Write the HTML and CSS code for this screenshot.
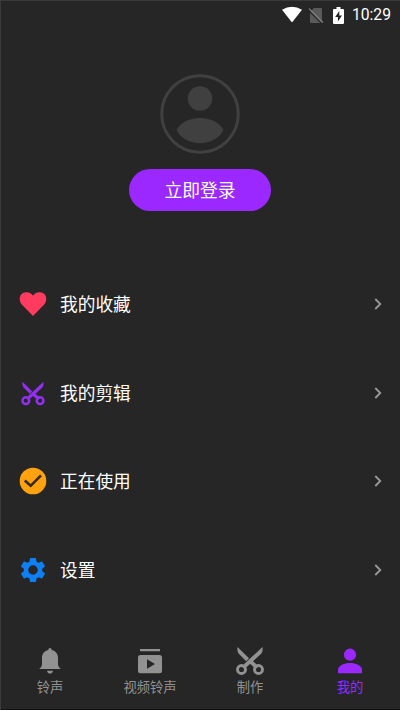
FILE: index.html
```html
<!DOCTYPE html>
<html lang="zh-CN">
<head>
<meta charset="utf-8">
<title>我的</title>
<link rel="stylesheet" href="styles.css">
</head>
<body>
<div class="screen">
  <header class="status">
    <svg class="wifi" width="20" height="16" viewBox="0 0 20 16"><path d="M0 3.2Q10-2.8 20 3.2L10 16Z"/></svg>
    <svg class="sim" width="16" height="17" viewBox="0 0 16 17"><path fill="#5a5a5a" d="M6 1h7q1 0 1 1v13q0 1-1 1H3q-1 0-1-1V5Z"/><path d="M.2 3 14 16.800" stroke="#262626" stroke-width="1.2"/><path d="M1 1.6 15 15.6" stroke="#858585" stroke-width="1.3"/></svg>
    <svg class="battery" width="11" height="17" viewBox="0 0 11 17"><path d="M3.5 0h4v2H10q1 0 1 1v13q0 1-1 1H1q-1 0-1-1V3q0-1 1-1h2.500Z"/><path fill="#222" d="M6.300 4 2.200 10h2.700v4.500L9 8.500H6.300Z"/></svg>
    <span class="clock">10:29</span>
  </header>

  <section class="profile">
    <svg width="80" height="80" viewBox="0 0 80 80"><circle cx="40" cy="40" r="38.300" fill="none" stroke="#404040" stroke-width="3"/><g fill="#404040"><circle cx="40" cy="24.500" r="12.200"/><path d="M16.500 56C21 48 30 44 40 44S59 48 63.500 56C59 64.500 50 69.200 40 69.200S21 64.500 16.500 56Z"/></g></svg>
    <button class="login">立即登录</button>
  </section>

  <nav class="menu">
    <a class="row"><svg class="icon" width="28" height="28" viewBox="0 0 28 28"><path fill="#ff3b5f" d="M14 26 3 14.800C-1 10.500.300 2.200 7.300 2.200Q11.700 2.200 14 5.600 16.300 2.200 20.700 2.200C27.700 2.200 29 10.500 25 14.800Z"/></svg><span>我的收藏</span><svg class="chevron" width="8" height="12" viewBox="0 0 8 12"><path d="m1.300 1 5 5-5 5"/></svg></a>
    <a class="row"><svg class="icon" width="28" height="28" viewBox="0 0 28 28"><use href="#scissors" color="#932ff0" transform="translate(2.200 2.800) scale(.84)"/></svg><span>我的剪辑</span><svg class="chevron" width="8" height="12" viewBox="0 0 8 12"><path d="m1.300 1 5 5-5 5"/></svg></a>
    <a class="row"><svg class="icon" width="28" height="28" viewBox="0 0 28 28"><circle cx="14" cy="14" r="13.300" fill="#ffa20d"/><path d="m5.800 13.500 5.900 5.300L22 8.300" fill="none" stroke="#332819" stroke-width="2.600"/></svg><span>正在使用</span><svg class="chevron" width="8" height="12" viewBox="0 0 8 12"><path d="m1.300 1 5 5-5 5"/></svg></a>
    <a class="row"><svg class="icon" width="28" height="28" viewBox="-1 -1 26 26"><path fill="#0d80f5" d="M19.430 12.980c.040-.320.070-.640.070-.980s-.030-.660-.070-.980l2.110-1.650c.190-.150.240-.420.120-.640l-2-3.460c-.120-.220-.390-.300-.610-.220l-2.490 1c-.520-.400-1.080-.730-1.690-.980l-.380-2.650C14.460 2.180 14.250 2 14 2h-4c-.250 0-.460.180-.490.420l-.380 2.650c-.610.250-1.170.590-1.690.980l-2.490-1c-.230-.090-.490 0-.610.220l-2 3.460c-.130.220-.070.490.120.640l2.110 1.650c-.040.320-.070.650-.070.980s.030.660.070.980l-2.110 1.650c-.190.150-.240.420-.120.640l2 3.460c.120.220.390.300.610.220l2.490-1c.520.400 1.080.730 1.690.980l.380 2.650c.030.240.240.420.490.420h4c.250 0 .460-.180.490-.420l.380-2.650c.610-.250 1.170-.590 1.690-.980l2.490 1c.230.090.490 0 .610-.220l2-3.460c.120-.220.070-.490-.120-.640ZM12 15.900a3.900 3.900 0 1 1 0-7.800 3.900 3.900 0 0 1 0 7.800Z" transform="translate(-1.680 -1.440) scale(1.140 1.120)"/></svg><span>设置</span><svg class="chevron" width="8" height="12" viewBox="0 0 8 12"><path d="m1.300 1 5 5-5 5"/></svg></a>
  </nav>

  <footer class="tabs">
    <a class="tab"><svg width="28" height="28" viewBox="0 0 28 28" fill="currentColor"><path d="M14 1q1.700 0 1.700 2C20 4 22 7 22 11v6.500q0 2 2.800 4.500H3.200Q6 19.500 6 17.500V11c0-4 2-7 6.300-8Q12.300 1 14 1ZM11 23.700h6q-.5 2.800-3 2.800t-3-2.800Z"/></svg><span>铃声</span></a>
    <a class="tab"><svg width="28" height="28" viewBox="0 0 28 28" fill="currentColor"><path fill-rule="evenodd" d="M4 2h20v2.200H4ZM4.500 8h19q2.500 0 2.500 2.500v13.300q0 2.500-2.500 2.500h-19q-2.500 0-2.500-2.500V10.500q0-2.500 2.500-2.500ZM11 12.300v9.500l8-4.800Z"/></svg><span>视频铃声</span></a>
    <a class="tab"><svg width="28" height="28" viewBox="0 0 28 28"><g id="scissors"><path fill="currentColor" d="M1.500 0 13 11.300 10.200 14.200 2.800 6.800Q.800 4 1.500 0ZM26.500 0Q27.200 4 25.200 6.800L8.500 22 5.800 19.200ZM13.200 16 16 13.200 22.500 19.300 19.800 22Z"/><g fill="none" stroke="currentColor" stroke-width="2.900"><circle cx="5.500" cy="22.500" r="4"/><circle cx="22.500" cy="22.500" r="4"/></g></g></svg><span>制作</span></a>
    <a class="tab active"><svg width="28" height="28" viewBox="0 0 28 28" fill="currentColor"><circle cx="14" cy="7.700" r="6.100"/><path d="M2 26.300v-3.600C2 18.500 8.500 16 14 16s12 2.500 12 6.700v3.600Z"/></svg><span>我的</span></a>
  </footer>
</div>
</body>
</html>
```

FILE: styles.css
```css
* { box-sizing: border-box; }

body {
  margin: 0;
  background: #262626;
  color: #fff;
  font-family: Roboto, "Noto Sans CJK SC", sans-serif;
}

svg { display: block; flex: none; }

.screen {
  width: 400px;
  height: 710px;
  display: flex;
  flex-direction: column;
  box-shadow: inset 1px 1px #3a3a3a, inset 0 -1px #101010;
}

.status {
  height: 30px;
  flex: none;
  display: flex;
  align-items: center;
  justify-content: flex-end;
  padding-right: 9px;
  fill: #fff;
}

.wifi, .clock { transform: translateY(-.5px); }
.sim { margin-left: 6px; }
.battery { margin-left: 9px; }
.clock { margin-left: 8px; font-size: 15.7px; line-height: 30px; }

.profile {
  height: 229.5px;
  flex: none;
  display: flex;
  flex-direction: column;
  align-items: center;
  padding-top: 44px;
}

.login {
  width: 142px;
  height: 42px;
  margin-top: 15px;
  padding: 0 0 2px;
  border: 0;
  border-radius: 21px;
  background: #9a28ff;
  color: #fff;
  font: 17.8px/40px "Noto Sans CJK SC", sans-serif;
}

.menu { height: 355.5px; flex: none; }

.row {
  height: 88.7px;
  display: flex;
  align-items: center;
  padding: 0 18px 0 19px;
  font-size: 17.7px;
}

.row span { margin-left: 13px; padding-bottom: 2px; flex: 1; }

.chevron {
  fill: none;
  stroke: #999;
  stroke-width: 1.8;
}

.tabs {
  flex: 1;
  display: flex;
  padding-top: 32px;
}

.tab {
  flex: 1;
  display: flex;
  flex-direction: column;
  align-items: center;
  color: #929292;
  font-size: 13.3px;
  line-height: 20px;
}

.tab span { margin-top: 3px; }
.active { color: #9a28ff; }
```
